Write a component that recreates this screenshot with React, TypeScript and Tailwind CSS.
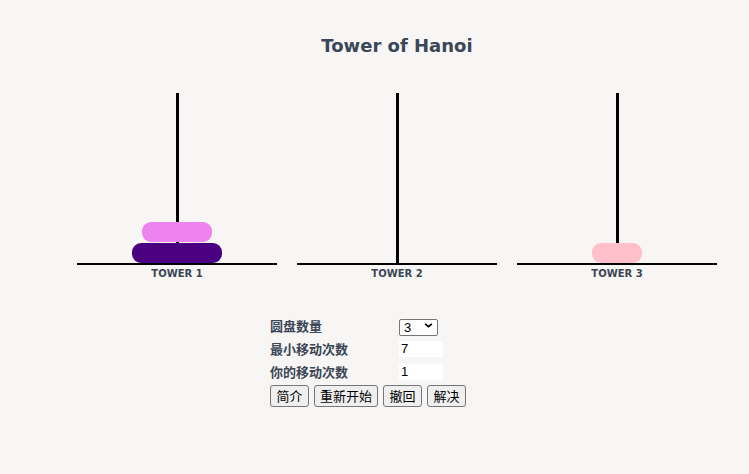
import { useState } from "react";

type Disk = { size: number; color: string };

const widths: Record<number, number> = { 1: 50, 2: 70, 3: 90 };

const initialTowers: Disk[][] = [
  [
    { size: 3, color: "#4b0082" },
    { size: 2, color: "#ee82ee" },
  ],
  [],
  [{ size: 1, color: "#ffc0cb" }],
];

const buttons = [
  { text: "简介", w: "w-[39px]" },
  { text: "重新开始", w: "w-[64px]" },
  { text: "撤回", w: "w-[39px]" },
  { text: "解决", w: "w-[39px]" },
];

function Tower({ label, disks }: { label: string; disks: Disk[] }) {
  return (
    <div className="flex w-[200px] flex-col items-center">
      <div className="relative flex h-[170px] w-full flex-col-reverse items-center gap-px">
        <div className="absolute left-[99px] top-0 h-full w-[3px] bg-black" />
        {disks.map((d) => (
          <div
            key={d.size}
            className="relative h-5 rounded-[9px]"
            style={{ width: widths[d.size], backgroundColor: d.color }}
          />
        ))}
      </div>
      <div className="h-[2px] w-full bg-black" />
      <p className="mt-[3px] text-[10px] font-bold leading-[12px] text-[#3b4656] [font-family:'DejaVu_Sans',sans-serif]">
        {label}
      </p>
    </div>
  );
}

export default function App() {
  const [towers] = useState(initialTowers);
  const [count, setCount] = useState("3");

  const cjk = "[font-family:'Noto_Sans_CJK_SC',sans-serif]";

  return (
    <div className="min-h-screen bg-[#f7f6f4]">
      <div className="ml-[77px] w-[640px] pt-[33px]">
        <h1 className="text-center text-[18px] font-bold leading-[26px] text-[#3b4656] [font-family:'DejaVu_Sans',sans-serif]">
          Tower of Hanoi
        </h1>
        <div className="mt-[34px] flex gap-5">
          {towers.map((t, i) => (
            <Tower key={i} label={`TOWER ${i + 1}`} disks={t} />
          ))}
        </div>

        <div className={`ml-[193px] mt-[34px] text-[13px] text-[#3b4656] ${cjk}`}>
          <div className="flex h-[23px] items-center">
            <span className="w-[129px] font-bold">圆盘数量</span>
            <div className="relative h-[17px] w-[39px]">
              <select
                value={count}
                onChange={(e) => setCount(e.target.value)}
                className="h-full w-full appearance-none rounded-[2px] border border-[#767676] bg-white pl-[4px] text-[13px] leading-[15px] text-black [font-family:'Liberation_Sans',sans-serif]"
              >
                <option>3</option>
                <option>4</option>
                <option>5</option>
              </select>
              <svg
                viewBox="0 0 10 6"
                className="pointer-events-none absolute right-[5px] top-[6px] h-[5px] w-[9px]"
              >
                <path d="M1 1l4 3.5L9 1" fill="none" stroke="#000" strokeWidth="2" />
              </svg>
            </div>
          </div>
          <div className="flex h-[23px] items-center">
            <span className="w-[129px] font-bold">最小移动次数</span>
            <input
              readOnly
              value="7"
              className="h-[16px] w-[44px] bg-white pl-[2px] text-[13px] text-black outline-none [font-family:'Liberation_Sans',sans-serif]"
            />
          </div>
          <div className="flex h-[23px] items-center">
            <span className="w-[129px] font-bold">你的移动次数</span>
            <input
              readOnly
              value="1"
              className="h-[16px] w-[44px] bg-white pl-[2px] text-[13px] text-black outline-none [font-family:'Liberation_Sans',sans-serif]"
            />
          </div>
          <div className="mt-[2px] flex gap-[5px]">
            {buttons.map((b) => (
              <button
                key={b.text}
                className={`${b.w} h-[22px] rounded-[3px] border border-[#767676] bg-[#efefef] text-center text-[13px] leading-[20px] text-black`}
              >
                {b.text}
              </button>
            ))}
          </div>
        </div>
      </div>
    </div>
  );
}
